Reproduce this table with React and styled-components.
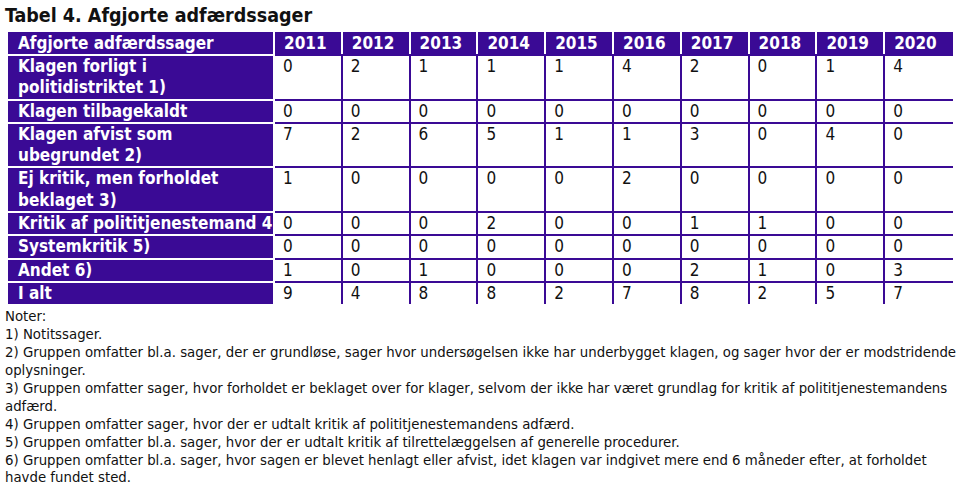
import React from "react";
import styled, { createGlobalStyle } from "styled-components";

const PURPLE = "#3a0a95";
const FONT = `"DejaVu Sans Condensed", "DejaVu Sans", sans-serif`;

const Global = createGlobalStyle`
  html, body { margin: 0; padding: 0; background: #fff; }
  body { font-family: ${FONT}; color: #111; }
`;

const Page = styled.div`
  width: 960px;
  height: 500px;
  overflow: hidden;
  padding: 5px 0 0 0;
  box-sizing: border-box;
`;

const Title = styled.h1`
  margin: 0 0 6px 5px;
  font-size: 19.5px;
  line-height: 21px;
  font-weight: bold;
  color: #111;
`;

const Grid = styled.div`
  margin-left: 8px;
  width: 945px;
  display: grid;
  grid-template-columns: 267px repeat(10, 1fr);
  font-size: 17px;
  line-height: 21.3px;
`;

const HeadCell = styled.div`
  background: ${PURPLE};
  color: #fff;
  font-weight: bold;
  height: 22px;
  line-height: 22px;
  padding-left: ${(p) => (p.$label ? "10px" : "9px")};
  border-right: ${(p) => (p.$last ? "0" : "2px solid #fff")};
  white-space: nowrap;
  overflow: hidden;
`;

const LabelCell = styled.div`
  background: ${PURPLE};
  color: #fff;
  font-weight: bold;
  padding: 0 0 0 10px;
  border-top: 2px solid #fff;
  overflow: hidden;
  white-space: ${(p) => (p.$nowrap ? "nowrap" : "normal")};
  border-right: 2px solid #fff;
`;

const DataCell = styled.div`
  background: #fff;
  color: #111;
  padding-left: 8px;
  border-top: 2px solid ${PURPLE};
  border-right: ${(p) => (p.$last ? "0" : `2px solid ${PURPLE}`)};
`;

const Notes = styled.div`
  margin: 3px 0 0 5px;
  font-size: 14.8px;
  line-height: 17.9px;
  color: #111;
`;

const NoteLine = styled.div``;

const years = [2011, 2012, 2013, 2014, 2015, 2016, 2017, 2018, 2019, 2020];

const rows = [
  { label: "Klagen forligt i politidistriktet 1)", v: [0, 2, 1, 1, 1, 4, 2, 0, 1, 4] },
  { label: "Klagen tilbagekaldt", v: [0, 0, 0, 0, 0, 0, 0, 0, 0, 0] },
  { label: "Klagen afvist som ubegrundet 2)", v: [7, 2, 6, 5, 1, 1, 3, 0, 4, 0] },
  { label: "Ej kritik, men forholdet beklaget 3)", v: [1, 0, 0, 0, 0, 2, 0, 0, 0, 0] },
  { label: "Kritik af polititjenestemand 4)", v: [0, 0, 0, 2, 0, 0, 1, 1, 0, 0], nowrap: true },
  { label: "Systemkritik 5)", v: [0, 0, 0, 0, 0, 0, 0, 0, 0, 0] },
  { label: "Andet 6)", v: [1, 0, 1, 0, 0, 0, 2, 1, 0, 3] },
  { label: "I alt", v: [9, 4, 8, 8, 2, 7, 8, 2, 5, 7] },
];

const notes = [
  "Noter:",
  "1) Notitssager.",
  "2) Gruppen omfatter bl.a. sager, der er grundløse, sager hvor undersøgelsen ikke har underbygget klagen, og sager hvor der er modstridende oplysninger.",
  "3) Gruppen omfatter sager, hvor forholdet er beklaget over for klager, selvom der ikke har været grundlag for kritik af polititjenestemandens adfærd.",
  "4) Gruppen omfatter sager, hvor der er udtalt kritik af polititjenestemandens adfærd.",
  "5) Gruppen omfatter bl.a. sager, hvor der er udtalt kritik af tilrettelæggelsen af generelle procedurer.",
  "6) Gruppen omfatter bl.a. sager, hvor sagen er blevet henlagt eller afvist, idet klagen var indgivet mere end 6 måneder efter, at forholdet havde fundet sted.",
];

export default function App() {
  return (
    <Page>
      <Global />
      <Title>Tabel 4. Afgjorte adfærdssager</Title>
      <Grid>
        <HeadCell $label>Afgjorte adfærdssager</HeadCell>
        {years.map((y, i) => (
          <HeadCell key={y} $last={i === years.length - 1}>{y}</HeadCell>
        ))}
        {rows.map((r) => (
          <React.Fragment key={r.label}>
            <LabelCell $nowrap={r.nowrap}>{r.label}</LabelCell>
            {r.v.map((n, i) => (
              <DataCell key={i} $last={i === r.v.length - 1}>{n}</DataCell>
            ))}
          </React.Fragment>
        ))}
      </Grid>
      <Notes>
        {notes.map((n) => (
          <NoteLine key={n}>{n}</NoteLine>
        ))}
      </Notes>
    </Page>
  );
}
